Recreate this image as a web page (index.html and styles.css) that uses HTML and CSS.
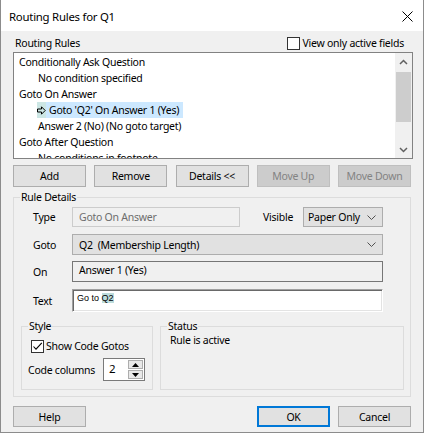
FILE: index.html
```html
<!DOCTYPE html>
<html>
<head>
<meta charset="utf-8">
<title>Routing Rules for Q1</title>
<link rel="stylesheet" href="styles.css">
</head>
<body>
<div class="window">
  <div class="titlebar">
    <span class="title">Routing Rules for Q1</span>
    <svg class="close" width="11" height="11" viewBox="0 0 11 11"><path d="M0.5 0.5L10.5 10.5M10.5 0.5L0.5 10.5" stroke="#000" stroke-width="1" fill="none"/></svg>
  </div>
  <div class="client">
    <div class="rules-head">
      <span>Routing Rules</span>
      <span class="check"><span class="box"></span><span>View only active fields</span></span>
    </div>
    <div class="listbox">
      <div class="items">
        <div class="item">Conditionally Ask Question</div>
        <div class="item sub">No condition specified</div>
        <div class="item">Goto On Answer</div>
        <div class="item sel"><span class="arrow"><svg width="9" height="9" viewBox="0 0 9 9"><path d="M0.5 3H4.5V0.8L8.2 4.5L4.5 8.2V6H0.5Z" stroke="#000" stroke-width="1" fill="none" stroke-linejoin="miter"/></svg></span><span class="seltext">Goto 'Q2' On Answer 1 (Yes)</span></div>
        <div class="item sub">Answer 2 (No) (No goto target)</div>
        <div class="item">Goto After Question</div>
        <div class="item sub">No conditions in footnote</div>
      </div>
      <div class="vscroll">
        <div class="sb-btn"><svg width="9" height="6" viewBox="0 0 9 6"><path d="M1 5L4.5 1.5L8 5" stroke="#606060" stroke-width="1.5" fill="none"/></svg></div>
        <div class="sb-track"><div class="sb-thumb"></div></div>
        <div class="sb-btn"><svg width="9" height="6" viewBox="0 0 9 6"><path d="M1 1L4.5 4.5L8 1" stroke="#606060" stroke-width="1.5" fill="none"/></svg></div>
      </div>
    </div>
    <div class="btnrow">
      <div class="btn">Add</div>
      <div class="btn">Remove</div>
      <div class="btn">Details &lt;&lt;</div>
      <div class="btn disabled">Move Up</div>
      <div class="btn disabled">Move Down</div>
    </div>
    <fieldset class="group details">
      <legend>Rule Details</legend>
      <div class="details-body">
        <div class="row r-type">
          <span class="lbl">Type</span>
          <div class="field type-box">Goto On Answer</div>
          <span class="vis-lbl">Visible</span>
          <div class="combo vis-combo"><span>Paper Only</span><svg width="9" height="5" viewBox="0 0 9 5"><path d="M0.5 0.5L4.5 4.5L8.5 0.5" stroke="#505050" stroke-width="1" fill="none"/></svg></div>
        </div>
        <div class="row r-goto">
          <span class="lbl">Goto</span>
          <div class="combo wide"><span>Q2&nbsp; (Membership Length)</span><svg width="9" height="5" viewBox="0 0 9 5"><path d="M0.5 0.5L4.5 4.5L8.5 0.5" stroke="#505050" stroke-width="1" fill="none"/></svg></div>
        </div>
        <div class="row r-on">
          <span class="lbl">On</span>
          <div class="field on-box wide">Answer 1 (Yes)</div>
        </div>
        <div class="row r-text">
          <span class="lbl">Text</span>
          <div class="field text-box wide">Go to <span class="hl">Q2</span></div>
        </div>
        <div class="subgroups">
          <fieldset class="group style-grp">
            <legend>Style</legend>
            <div class="check show-code"><span class="box"><svg width="11" height="11" viewBox="0 0 11 11"><path d="M1.5 5.5L4 8.2L9.8 1.8" stroke="#000" stroke-width="1.1" fill="none"/></svg></span><span>Show Code Gotos</span></div>
            <div class="cols-row">
              <span class="cols-lbl">Code columns</span>
              <div class="spin">
                <div class="spin-val">2</div>
                <div class="spin-btns">
                  <div class="spin-btn"><svg width="7" height="4" viewBox="0 0 7 4"><path d="M0 4L3.5 0L7 4Z" fill="#000"/></svg></div>
                  <div class="spin-btn"><svg width="7" height="4" viewBox="0 0 7 4"><path d="M0 0L3.5 4L7 0Z" fill="#000"/></svg></div>
                </div>
              </div>
            </div>
          </fieldset>
          <fieldset class="group status-grp">
            <legend>Status</legend>
            <div class="status-text">Rule is active</div>
          </fieldset>
        </div>
      </div>
    </fieldset>
    <div class="bottomrow">
      <div class="btn">Help</div>
      <div class="spacer"></div>
      <div class="btn default">OK</div>
      <div class="btn">Cancel</div>
    </div>
  </div>
</div>
</body>
</html>
```
FILE: styles.css
```css
* { box-sizing: border-box; }
html, body { margin: 0; padding: 0; background: #ffffff; }
body {
  font-family: "Noto Sans", "DejaVu Sans", sans-serif;
  font-size: 10.5px;
  letter-spacing: -0.25px;
  color: #000;
}
.window {
  width: 424px;
  height: 433px;
  border: 1px solid #8c8c8c;
  border-top: none;
  background: #f0f0f0;
  display: flex;
  flex-direction: column;
}
.titlebar {
  height: 31px;
  flex: none;
  background: #fff;
  display: flex;
  align-items: center;
  justify-content: space-between;
  padding: 1px 10px 0 8px;
}
.title { font-size: 11.4px; }
.client {
  flex: 1;
  display: flex;
  flex-direction: column;
  padding: 0 10px 0 12px;
}
.rules-head {
  height: 21px;
  padding: 4px 9px 1px 2px;
  display: flex;
  align-items: center;
  justify-content: space-between;
  line-height: 16px;
}
.check { display: flex; align-items: center; }
.box {
  width: 13px; height: 13px;
  border: 1px solid #333;
  background: #fff;
  margin-right: 3px;
  display: flex; align-items: center; justify-content: center;
}
.listbox {
  height: 107px;
  width: 400px;
  border: 1px solid #828282;
  background: #fff;
  display: flex;
}
.items {
  flex: 1;
  overflow: hidden;
  padding-top: 1px;
}
.item {
  height: 16px;
  line-height: 16px;
  padding-left: 5px;
  white-space: nowrap;
  display: flex;
}
.item.sub { padding-left: 24px; }
.item.sel { padding-left: 23px; }
.arrow {
  width: 9px;
  background: #cce6e4;
  display: flex;
  align-items: center;
  justify-content: center;
}
.seltext {
  background: #cce8ff;
  padding: 0 4px 0 3px;
}
.vscroll {
  width: 17px;
  background: #f0f0f0;
  display: flex;
  flex-direction: column;
}
.sb-btn {
  height: 17px;
  display: flex;
  align-items: center;
  justify-content: center;
}
.sb-track { flex: 1; padding: 2px 1px 0 1px; }
.sb-thumb { height: 50px; background: #cdcdcd; }
.btnrow {
  margin-top: 6px;
  width: 398px;
  height: 22px;
  display: flex;
  justify-content: space-between;
}
.btn {
  width: 73px;
  height: 100%;
  background: #e1e1e1;
  border: 1px solid #adadad;
  display: flex;
  align-items: center;
  justify-content: center;
  white-space: nowrap;
}
.btn.disabled {
  background: #cccccc;
  border-color: #bfbfbf;
  color: #838383;
}
.btn.default { border: 2px solid #0078d7; }
.group {
  margin: 0;
  padding: 0;
  border: 1px solid #dcdcdc;
  min-width: 0;
}
.group legend {
  margin-left: 6px;
  padding: 0 1px;
  line-height: 16px;
}
.details {
  margin-top: 2px;
  width: 398px;
}
.details-body {
  padding: 2px 0 6px 19px;
}
.row { display: flex; align-items: center; }
.lbl { width: 39px; flex: none; }
.r-type { height: 20px; }
.r-goto { height: 21px; margin-top: 7px; }
.r-on { height: 21px; margin-top: 6px; }
.r-text { height: 23px; margin-top: 7px; }
.field {
  height: 100%;
  padding-left: 6px;
  white-space: nowrap;
}
.type-box {
  width: 168px;
  border: 1px solid #cccccc;
  background: #f0f0f0;
  color: #6d6d6d;
  display: flex;
  align-items: center;
}
.vis-lbl { margin-left: 23px; width: 40px; }
.combo {
  height: 100%;
  background: #e1e1e1;
  border: 1px solid #adadad;
  display: flex;
  align-items: center;
  justify-content: space-between;
  padding: 0 6px 0 6px;
  white-space: nowrap;
}
.vis-combo { width: 80px; padding-left: 4px; }
.wide { width: 311px; }
.on-box {
  border: 1px solid #767676;
  background: #f0f0f0;
  line-height: 17px;
}
.text-box {
  background: #fff;
  border: 1px solid;
  border-color: #a0a0a0 #ffffff #ffffff #a0a0a0;
  box-shadow: inset 1px 1px #696969, inset -1px -1px #e3e3e3;
  font-family: "Liberation Sans", Arial, sans-serif;
  font-size: 9px;
  letter-spacing: 0;
  padding: 3px 0 0 4px;
  line-height: 11px;
}
.hl { background: #bcdcdc; }
.subgroups {
  display: flex;
  margin-top: 6px;
  margin-left: -12px;
  gap: 7px;
}
.style-grp { width: 132px; height: 72px; }
.status-grp { width: 244px; height: 72px; }
.show-code {
  margin-top: 4px;
  padding-left: 9px;
  height: 16px;
}
.show-code .box { margin-right: 2px; }
.cols-row {
  display: flex;
  align-items: center;
  margin-top: 4px;
  padding-left: 6px;
}
.cols-lbl { width: 75px; }
.spin {
  width: 42px;
  height: 23px;
  display: flex;
  border: 1px solid #7a7a7a;
  background: #fff;
}
.spin-val {
  flex: 1;
  padding-left: 5px;
  line-height: 20px;
  font-size: 11.5px;
}
.spin-btns {
  width: 16px;
  display: flex;
  flex-direction: column;
  padding: 1px 1px 1px 0;
  gap: 1px;
}
.spin-btn {
  flex: 1;
  background: #e8e8e8;
  border: 1px solid #adadad;
  display: flex;
  align-items: center;
  justify-content: center;
}
.status-text {
  padding-left: 9px;
  line-height: 12px;
}
.bottomrow {
  margin-top: 9px;
  height: 21px;
  width: 398px;
  display: flex;
  gap: 8px;
}
.spacer { flex: 1; }
```
